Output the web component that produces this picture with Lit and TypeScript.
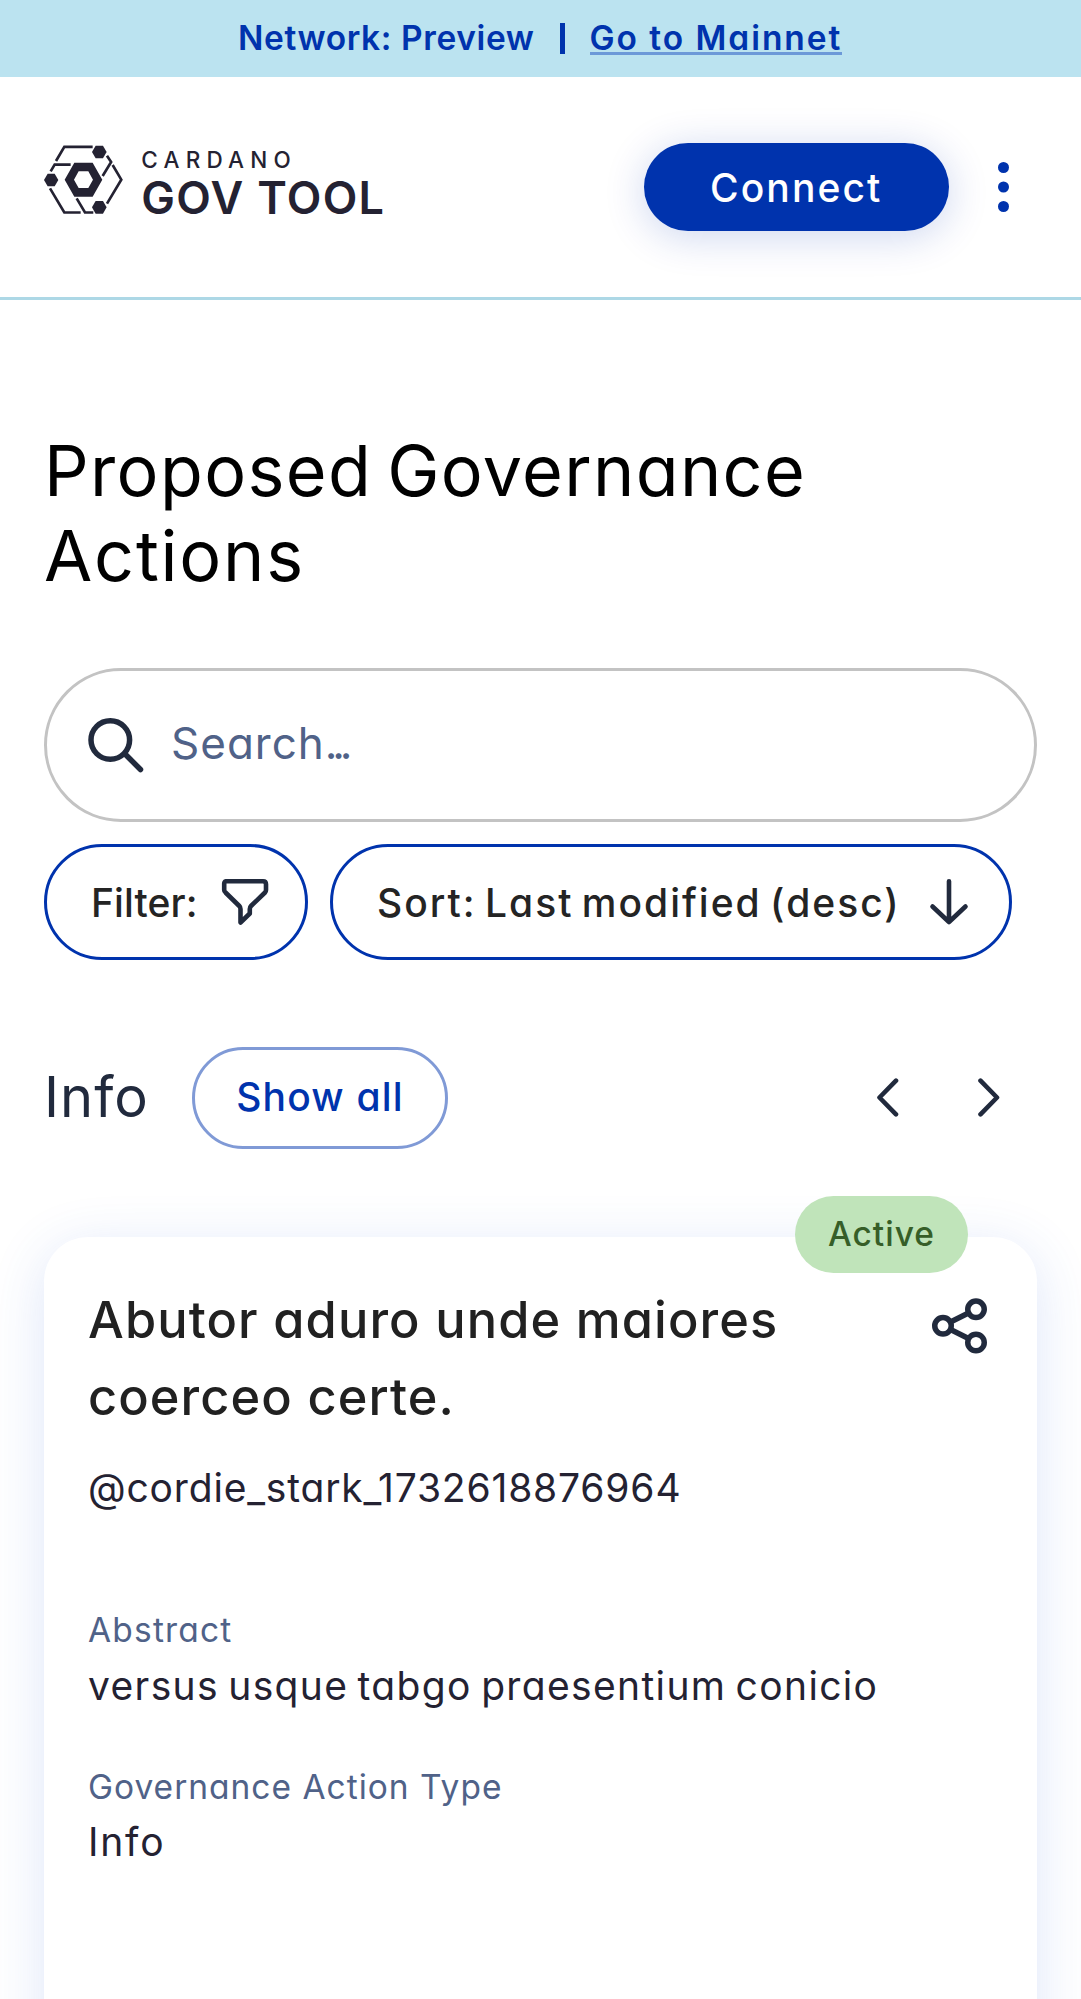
import { LitElement, html, css, svg } from "lit";
import { customElement } from "lit/decorators.js";

const logoMark = svg`
  <g fill="none" stroke="currentColor" stroke-width="8">
    <path d="M78 94 L103 51.500 H188"/>
    <path d="M231 78 L243.500 97 L218 139"/>
    <path d="M248 106 L274 150 L231 222"/>
    <path d="M62 125 L74 105 H122"/>
    <path d="M60 176 L103 248.500 H152"/>
    <path d="M140 206 L165 248.500 H190"/>
  </g>
  <g fill="currentColor">
    <path d="M186 67 L197 48 H219 L230 67 L219 86 H197Z"/>
    <path d="M42 151 L53 132 H74 L85 151 L74 170 H53Z"/>
    <path d="M186 233 L197 214 H219 L230 233 L219 252 H197Z"/>
    <path fill-rule="evenodd" d="M104 150 L133 99 H188 L217 150 L188 201 H133Z M132 150 L146 175 H175 L189 150 L175 125 H146Z"/>
  </g>`;

@customElement("app-root")
export class AppRoot extends LitElement {
  static styles = css`
    :host {
      display: block;
      box-sizing: border-box;
      height: 1999px;
      overflow: hidden;
      background: #fff;
      color: #242232;
      font-family: Inter, "Open Sans", sans-serif;
      font-feature-settings: "cv11" 1;
      font-size: 39px;
      white-space: nowrap;
    }
    * { box-sizing: border-box; }
    svg { display: block; flex: none; }
    h1, h2, h3, p { margin: 0; font-weight: 400; }
    button { font: inherit; font-feature-settings: inherit; margin: 0; }

    .banner {
      display: flex; align-items: center; height: 77px; padding-left: 238px;
      background: #bbe3f0; color: #0033ad; font-size: 33.500px; font-weight: 600;
    }
    .network { width: 321.500px; padding-bottom: 1px; letter-spacing: .6px; }
    .divider { width: 5px; height: 31px; margin: -1px 25px 0 0; background: #0033ad; }
    .mainnet { letter-spacing: 1.950px; height: 33px; line-height: 32px; border-bottom: 3px solid #6c99d8; }

    header {
      display: flex; align-items: center; height: 223px; padding: 0 44px;
      border-bottom: 3px solid #add8e6; padding-bottom: 0;
    }
    .logo { display: flex; width: 599.500px; margin-top: -8px; color: #242232; }
    .words { display: flex; flex-direction: column; margin-left: 18px; }
    .cardano { font-size: 22.500px; font-weight: 500; line-height: 29px; letter-spacing: 6.200px; }
    .gov { font-size: 45px; font-weight: 600; line-height: 48px; letter-spacing: 1.300px; }
    .connect {
      width: 305.500px; height: 88px; border: 0; border-radius: 44px;
      background: #0033ad; color: #fff; font-weight: 500; letter-spacing: 2.100px;
      box-shadow: 0 5.500px 41px rgba(0, 51, 173, .2);
    }
    .dots { margin-left: 49px; }

    main { padding: 127.500px 44px 0; }
    h1 { font-size: 70px; line-height: 85px; color: #000; letter-spacing: 1.350px; word-spacing: -6px; }
    .h1b { letter-spacing: 1.800px; }
    .search {
      display: flex; align-items: center; height: 154px; margin-top: 70.500px; padding-left: 41px;
      border: 3px solid #c3c3c3; border-radius: 77px; color: #506288; font-size: 44px;
    }
    .search span { letter-spacing: 1px; }
    .search .text { margin: -4px 0 0 26px; }
    .search .ellipsis { letter-spacing: -5.200px; }
    .controls { display: flex; gap: 22px; margin-top: 22px; }
    .pill {
      display: flex; align-items: center; height: 116px; padding: 0 0 0 44px;
      border: 3px solid #0033ad; border-radius: 58px; background: #fff; color: #242424; font-weight: 500;
    }
    .filter { width: 264px; }
    .sort { width: 682px; }
    .filter .label { width: 128.500px; text-align: left; letter-spacing: .1px; }
    .sort .label { width: 543.500px; text-align: left; letter-spacing: 2px; word-spacing: -4px; }
    .info-row { display: flex; align-items: center; height: 102px; margin-top: 87px; }
    h2 { width: 148px; margin-top: -2px; font-size: 56px; color: #212a3d; letter-spacing: 1px; }
    .show {
      width: 256px; height: 102px; padding-bottom: 4px; border: 3px solid #809ad6; border-radius: 51px;
      background: #fff; color: #0033ad; font-weight: 500; letter-spacing: 1.200px;
    }
    .prev { margin-left: 426.500px; }
    .next { margin-left: 77.500px; }
    .card {
      position: relative; height: 850px; margin-top: 88px; padding: 44px 44px;
      border-radius: 44px; background: #fff;
      box-shadow: 0 11px 55px rgba(47, 98, 220, .16);
    }
    .badge {
      position: absolute; left: 751px; top: -41px; width: 173px; height: 77px; border-radius: 38.500px;
      background: #c0e4ba; color: #365e28; font-size: 33.500px; font-weight: 500; letter-spacing: 1px;
      display: flex; align-items: center; justify-content: center; padding-bottom: 2px;
    }
    .top { display: flex; justify-content: space-between; }
    .top svg { margin: 16.500px 5px 0 0; }
    h3 { font-size: 50.500px; font-weight: 500; line-height: 77px; color: #212121; letter-spacing: 1.100px; }
    .body { line-height: 58px; }
    .handle { margin-top: 24px; letter-spacing: .830px; }
    .label-s { font-size: 33.500px; line-height: 50px; color: #506288; }
    .abstract { margin-top: 88px; letter-spacing: 1.200px; }
    .type { margin-top: 47px; letter-spacing: 1px; }
    .summary { margin-top: 2px; letter-spacing: 1.350px; word-spacing: -3px; }
    .kind { margin-top: 1px; letter-spacing: 1.800px; }
  `;

  render() {
    return html`
      <div class="banner">
        <div class="network">Network: Preview</div>
        <div class="divider"></div>
        <div class="mainnet">Go to Mainnet</div>
      </div>
      <header>
        <div class="logo">
          <svg width="79.300" height="69.300" viewBox="42 46 238 208">${logoMark}</svg>
          <div class="words"><span class="cardano">CARDANO</span><span class="gov">GOV TOOL</span></div>
        </div>
        <button class="connect">Connect</button>
        <svg class="dots" width="11" height="50" viewBox="0 0 11 50" fill="#0033ad">
          <circle cx="5.500" cy="5.500" r="5.500"/><circle cx="5.500" cy="25" r="5.500"/><circle cx="5.500" cy="44.500" r="5.500"/>
        </svg>
      </header>
      <main>
        <h1>Proposed Governance<br><span class="h1b">Actions</span></h1>
        <div class="search">
          <svg width="57" height="57" viewBox="0 0 57 57" fill="none" stroke="#212a3d" stroke-width="5.500" stroke-linecap="round">
            <circle cx="22.300" cy="23" r="19.300"/><path d="M37 37 L52.500 52.500"/>
          </svg>
          <div class="text"><span>Search</span><span class="ellipsis">...</span></div>
        </div>
        <div class="controls">
          <button class="pill filter">
            <span class="label">Filter:</span>
            <svg width="50" height="50" viewBox="0 0 50 50" fill="none" stroke="#212a3d" stroke-width="4.600" stroke-linejoin="round">
              <path d="M5.500 4.200 H43 Q46 4.200 46 7.200 V13 Q46 14.500 45 15.500 L31 29 Q29.800 30.200 29.800 32 V36.500 L20.500 45.500 V32 Q20.500 30.200 19.300 29 L5.500 15.500 Q4.200 14.500 4.200 13 V6.500 Q4.200 4.200 6.500 4.200Z"/>
            </svg>
          </button>
          <button class="pill sort">
            <span class="label">Sort: Last modified (desc)</span>
            <svg width="58" height="50" viewBox="0 0 58 50" fill="none" stroke="#212a3d" stroke-width="4.600" stroke-linecap="round" stroke-linejoin="round">
              <path d="M28 4.300 V45 M11.500 29.500 L28 45 L44.500 29.500"/>
            </svg>
          </button>
        </div>
        <div class="info-row">
          <h2>Info</h2>
          <button class="show">Show all</button>
          <svg class="prev" width="26" height="40" viewBox="0 0 26 40" fill="none" stroke="#212a3d" stroke-width="4.600" stroke-linecap="round" stroke-linejoin="round"><path d="M21 2.700 L4.500 19.500 L21 36.300"/></svg>
          <svg class="next" width="26" height="40" viewBox="0 0 26 40" fill="none" stroke="#212a3d" stroke-width="4.600" stroke-linecap="round" stroke-linejoin="round"><path d="M2.500 2.700 L19 19.500 L2.500 36.300"/></svg>
        </div>
        <section class="card">
          <div class="badge">Active</div>
          <div class="top">
            <h3>Abutor aduro unde maiores<br>coerceo certe.</h3>
            <svg width="56" height="56" viewBox="0 0 56 56" fill="none" stroke="#212a3d" stroke-width="5.500">
              <circle cx="11" cy="27.800" r="8.250"/><circle cx="44" cy="11.300" r="8.250"/><circle cx="44" cy="44.500" r="8.250"/>
              <path d="M18.500 24 L36.500 15 M18.500 31.500 L36.500 40.500"/>
            </svg>
          </div>
          <p class="body handle">@cordie_stark_1732618876964</p>
          <p class="label-s abstract">Abstract</p>
          <p class="body summary">versus usque tabgo praesentium conicio</p>
          <p class="label-s type">Governance Action Type</p>
          <p class="body kind">Info</p>
        </section>
      </main>
    `;
  }
}
